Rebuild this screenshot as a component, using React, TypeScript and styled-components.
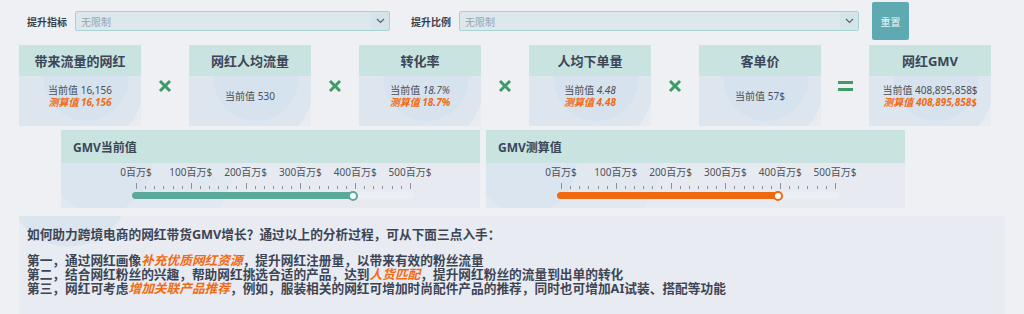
import React from "react";
import styled, { createGlobalStyle } from "styled-components";

const GlobalStyle = createGlobalStyle`
  html, body {
    margin: 0;
    padding: 0;
    background: #eef0f4;
  }
  body {
    font-family: "Noto Sans", "Noto Sans CJK SC", sans-serif;
    color: #3d4555;
  }
`;

interface Imetric {
  title: string;
  current: string;
  estimate?: string;
  italic?: boolean;
}

const metrics: Imetric[] = [
  { title: "带来流量的网红", current: "16,156", estimate: "16,156" },
  { title: "网红人均流量", current: "530" },
  { title: "转化率", current: "18.7%", estimate: "18.7%", italic: true },
  { title: "人均下单量", current: "4.48", estimate: "4.48", italic: true },
  { title: "客单价", current: "57$" },
  { title: "网红GMV", current: "408,895,858$", estimate: "408,895,858$" },
];

const ops = ["x", "x", "x", "x", "="];

const SCALE = ["0百万$", "100百万$", "200百万$", "300百万$", "400百万$", "500百万$"];
const GMV = 408.895858;
const RANGE = 274;

const Chevron = () => (
  <svg width="9" height="6" viewBox="0 0 9 6">
    <path d="M1 1 L4.5 4.5 L8 1" fill="none" stroke="#5b6472" strokeWidth="1.2" />
  </svg>
);

const Times = () => (
  <svg width="14" height="14" viewBox="0 0 14 14">
    <path d="M2 2 L12 12 M12 2 L2 12" stroke="#3f9a68" strokeWidth="3" strokeLinecap="butt" />
  </svg>
);

const Equals = () => (
  <svg width="15" height="12" viewBox="0 0 15 12">
    <rect x="0" y="1" width="15" height="3" fill="#3f9a68" />
    <rect x="0" y="8" width="15" height="3" fill="#3f9a68" />
  </svg>
);

const Slider = ({ color }: { color: string }) => {
  const ticks = Array.from({ length: 31 }, (_, i) => i);
  const width = (GMV / 500) * RANGE;
  return (
    <SliderWrap>
      <Labels>
        {SCALE.map((s) => (
          <Label key={s}>{s}</Label>
        ))}
      </Labels>
      <Ticks>
        {ticks.map((t) => (
          <Tick key={t} $major={t % 6 === 0} />
        ))}
      </Ticks>
      <Rail>
        <Fill $color={color} style={{ width }}>
          <Thumb $color={color} />
        </Fill>
      </Rail>
    </SliderWrap>
  );
};

const App = () => {
  return (
    <Page>
      <GlobalStyle />
      <Filters>
        <FieldLabel>提升指标</FieldLabel>
        <Select $width={315}>
          <Placeholder>无限制</Placeholder>
          <Arrow>
            <Chevron />
          </Arrow>
        </Select>
        <FieldLabel $gap={21}>提升比例</FieldLabel>
        <Select $width={400}>
          <Placeholder>无限制</Placeholder>
          <Arrow>
            <Chevron />
          </Arrow>
        </Select>
        <ResetButton>重置</ResetButton>
      </Filters>

      <Formula>
        {metrics.map((m, i) => (
          <React.Fragment key={m.title}>
            <Card>
              <CardHead>{m.title}</CardHead>
              <CardBody>
                <Current>
                  当前值 <Num $italic={m.italic}>{m.current}</Num>
                </Current>
                {m.estimate && <Estimate>测算值 {m.estimate}</Estimate>}
              </CardBody>
            </Card>
            {i < ops.length && <Operator>{ops[i] === "=" ? <Equals /> : <Times />}</Operator>}
          </React.Fragment>
        ))}
      </Formula>

      <Panels>
        <Panel>
          <PanelHead>GMV当前值</PanelHead>
          <PanelBody>
            <Slider color="#5aa99a" />
          </PanelBody>
        </Panel>
        <Panel>
          <PanelHead>GMV测算值</PanelHead>
          <PanelBody>
            <Slider color="#f0680f" />
          </PanelBody>
        </Panel>
      </Panels>

      <Summary>
        <Question>如何助力跨境电商的网红带货GMV增长？通过以上的分析过程，可从下面三点入手：</Question>
        <Line>
          第一，通过网红画像<Hl>补充优质网红资源</Hl>，提升网红注册量，以带来有效的粉丝流量
        </Line>
        <Line>
          第二，结合网红粉丝的兴趣，帮助网红挑选合适的产品，达到<Hl>人货匹配</Hl>，提升网红粉丝的流量到出单的转化
        </Line>
        <Line>
          第三，网红可考虑<Hl>增加关联产品推荐</Hl>，例如，服装相关的网红可增加时尚配件产品的推荐，同时也可增加AI试装、搭配等功能
        </Line>
      </Summary>
    </Page>
  );
};

const Page = styled.div`
  width: 1024px;
  height: 314px;
  overflow: hidden;
  background: #eef0f4;
`;

const Filters = styled.div`
  display: flex;
  align-items: center;
  padding: 2px 0 0 27px;
  height: 38px;
`;

const FieldLabel = styled.span<{ $gap?: number }>`
  margin-left: ${(p) => p.$gap ?? 0}px;
  margin-right: 8px;
  font-size: 10px;
  font-weight: 700;
  color: #3b3f48;
  white-space: nowrap;
`;

const Select = styled.div<{ $width: number }>`
  width: ${(p) => p.$width}px;
  height: 20px;
  box-sizing: border-box;
  display: flex;
  align-items: center;
  background: #dde8ec;
  border: 1px solid #a9d2d5;
  border-radius: 2px;
`;

const Placeholder = styled.span`
  flex: 1;
  padding-left: 5px;
  font-size: 10px;
  color: #9aa3aa;
`;

const Arrow = styled.span`
  width: 18px;
  height: 100%;
  display: flex;
  align-items: center;
  justify-content: center;
  background: #d5e4e8;
`;

const ResetButton = styled.button`
  margin-left: 13px;
  width: 37px;
  height: 38px;
  border: none;
  border-radius: 2px;
  background: #5eaab2;
  color: #e9f5f6;
  font-family: "Noto Sans CJK SC", sans-serif;
  font-size: 10px;
  padding: 0;
`;

const Formula = styled.div`
  display: grid;
  grid-template-columns: 122px repeat(5, 48px 122px);
  margin: 5px 0 0 19px;
  height: 81px;
`;

const Card = styled.div`
  display: flex;
  flex-direction: column;
  overflow: hidden;
  background: #e9ecf1;
`;

const CardHead = styled.div`
  height: 31px;
  display: flex;
  align-items: center;
  justify-content: center;
  background: #c8e3e0;
  font-size: 13px;
  font-weight: 700;
  color: #3b4658;
`;

const CardBody = styled.div`
  flex: 1;
  display: flex;
  flex-direction: column;
  align-items: center;
  justify-content: center;
  padding-bottom: 9px;
  background:
    radial-gradient(circle at 55% 5%, #d6e2ee 0 42px, rgba(214, 226, 238, 0) 43px),
    radial-gradient(circle at 45% 10%, #dde6ef 0 70px, rgba(221, 230, 239, 0) 71px),
    #e8ebf0;
  font-size: 10px;
  line-height: 11.5px;
`;

const Current = styled.div`
  color: #4a4f58;
`;

const Num = styled.span<{ $italic?: boolean }>`
  font-style: ${(p) => (p.$italic ? "italic" : "normal")};
`;

const Estimate = styled.div`
  color: #f26a12;
  font-weight: 700;
  font-style: italic;
`;

const Operator = styled.div`
  display: flex;
  align-items: center;
  justify-content: center;
`;

const Panels = styled.div`
  display: flex;
  gap: 6px;
  margin: 4px 0 0 61px;
`;

const Panel = styled.div`
  width: 419px;
  display: flex;
  flex-direction: column;
`;

const PanelHead = styled.div`
  height: 33px;
  display: flex;
  align-items: center;
  padding-left: 12px;
  background: #c8e3e0;
  font-size: 12px;
  font-weight: 700;
  color: #3b4658;
`;

const PanelBody = styled.div`
  height: 45px;
  background:
    radial-gradient(circle at 40px 0, #dbe5ef 0 50px, rgba(219, 229, 239, 0) 51px),
    radial-gradient(circle at 80px -10px, #e1e8f0 0 95px, rgba(225, 232, 240, 0) 96px),
    #e7ebf1;
`;

const SliderWrap = styled.div`
  margin-left: 75px;
  width: ${RANGE}px;
  padding-top: 3px;
`;

const Labels = styled.div`
  display: flex;
  margin-left: -27.4px;
  width: ${RANGE + 54.8}px;
`;

const Label = styled.span`
  flex: 0 0 54.8px;
  text-align: center;
  font-size: 10px;
  line-height: 13px;
  color: #4d525b;
  white-space: nowrap;
`;

const Ticks = styled.div`
  display: flex;
  justify-content: space-between;
  align-items: flex-end;
  width: ${RANGE + 1}px;
  height: 6px;
  margin-top: 4px;
`;

const Tick = styled.span<{ $major: boolean }>`
  width: 1px;
  height: ${(p) => (p.$major ? 6 : 3)}px;
  background: #8a8f98;
`;

const Rail = styled.div`
  margin: 3px 0 0 -4px;
  width: ${RANGE + 8}px;
  height: 7px;
  border-radius: 4px;
  background: #ebeef2;
`;

const Fill = styled.div<{ $color: string }>`
  position: relative;
  height: 100%;
  border-radius: 4px;
  background: ${(p) => p.$color};
`;

const Thumb = styled.span<{ $color: string }>`
  position: absolute;
  right: -2px;
  top: 50%;
  width: 6px;
  height: 6px;
  transform: translateY(-50%);
  border-radius: 50%;
  background: #fff;
  border: 2px solid ${(p) => p.$color};
`;

const Summary = styled.div`
  margin: 8px 19px 0 19px;
  height: 98px;
  box-sizing: border-box;
  padding: 11px 8px 0;
  background:
    radial-gradient(circle at 50px -30px, #dbe5ef 0 60px, rgba(219, 229, 239, 0) 61px),
    #e8ebf1;
  font-size: 12.7px;
  font-weight: 700;
  color: #3d4555;
  line-height: 14px;
`;

const Question = styled.div`
  margin-bottom: 12px;
`;

const Line = styled.div``;

const Hl = styled.span`
  color: #f26a12;
  font-style: italic;
`;

export default App;
